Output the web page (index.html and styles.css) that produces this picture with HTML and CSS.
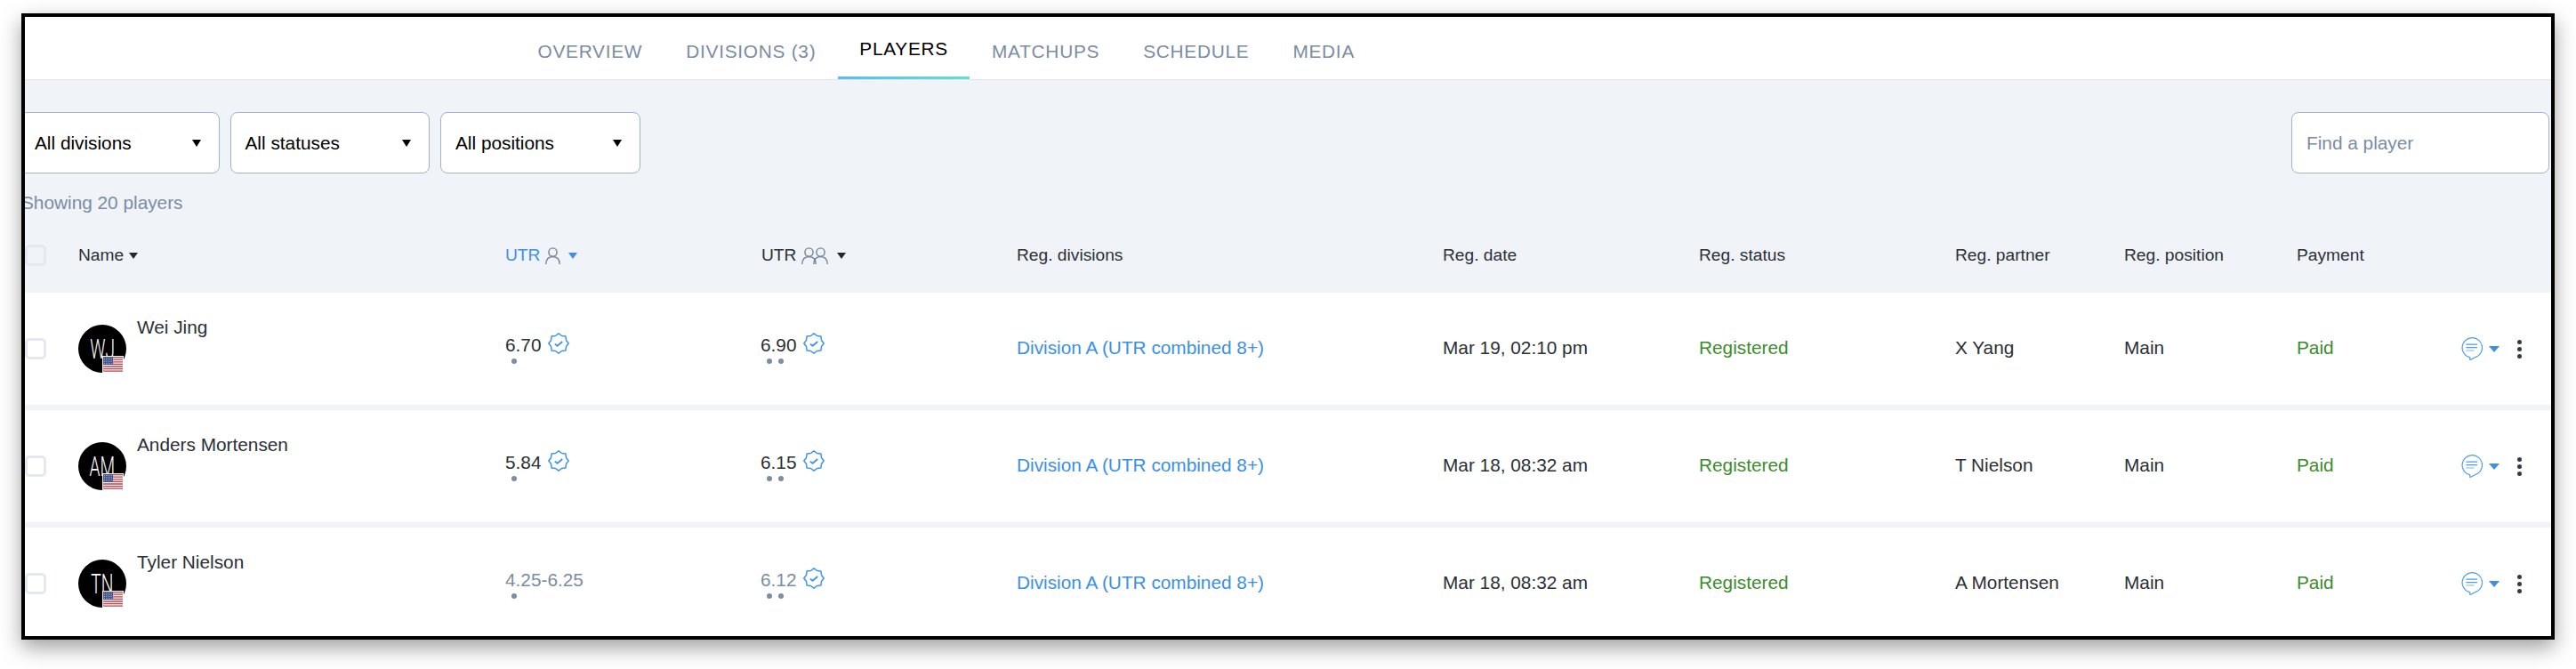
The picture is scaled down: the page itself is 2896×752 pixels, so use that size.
FILE: index.html
```html
<!DOCTYPE html>
<html lang="en">
<head>
<meta charset="utf-8">
<title>Players</title>
<link rel="stylesheet" href="styles.css">
</head>
<body>
<svg class="defs" aria-hidden="true">
  <symbol id="badge" viewBox="0 0 24 24">
    <polygon class="badge-line" points="12,.8 15.52,3.5 19.92,4.08 20.5,8.48 23.2,12 20.5,15.52 19.92,19.92 15.52,20.5 12,23.2 8.48,20.5 4.08,19.92 3.5,15.52 .8,12 3.5,8.48 4.08,4.08 8.48,3.5"/>
    <polyline class="badge-check" points="7.8,12.6 10.6,14.8 16.2,10"/>
  </symbol>
  <symbol id="person" viewBox="0 0 17 19">
    <circle class="person-line" cx="8.5" cy="5.5" r="4.6"/>
    <path class="person-line" d="M.8 19C.8 13.2 4 10.6 8.5 10.6S16.2 13.2 16.2 19"/>
  </symbol>
  <symbol id="people" viewBox="0 0 30 19">
    <circle class="person-line" cx="8.5" cy="5.5" r="4.6"/>
    <path class="person-line" d="M.8 19C.8 13.2 4 10.6 8.5 10.6S16.2 13.2 16.2 19"/>
    <circle class="person-line" cx="21.5" cy="5.5" r="4.6"/>
    <path class="person-line" d="M13.8 19C13.8 13.2 17 10.6 21.5 10.6S29.2 13.2 29.2 19"/>
  </symbol>
  <symbol id="chat" viewBox="0 0 24 26">
    <path class="chat-line" d="M9.5 22.7A11.2 11.2 0 1 1 18.5 21.2L10 25.5Z"/>
    <path class="chat-text" d="M5.5 8.2H18M5.5 11.6H18"/>
    <path class="chat-text chat-last" d="M5.5 15H14.5"/>
  </symbol>
  <symbol id="flag" viewBox="0 0 22 17">
    <rect width="22" height="17" fill="#f3eeee"/>
    <path d="M0 .6H22M0 3.2H22M0 5.8H22M0 8.4H22M0 11H22M0 13.6H22M0 16.2H22" stroke="#bb4c55" stroke-width="1.3"/>
    <rect width="11" height="9" fill="#47568c"/>
    <path d="M1 1.5H10M1 3.5H10M1 5.5H10M1 7.5H10" stroke="#a4acc9" stroke-width=".8" stroke-dasharray="1 1"/>
  </symbol>
</svg>

<main class="frame">
  <nav class="tabs">
    <a class="tab">OVERVIEW</a>
    <a class="tab">DIVISIONS (3)</a>
    <a class="tab tab-active">PLAYERS</a>
    <a class="tab">MATCHUPS</a>
    <a class="tab">SCHEDULE</a>
    <a class="tab">MEDIA</a>
  </nav>

  <section class="panel">
    <div class="filters">
      <div class="select">All divisions<i class="caret caret-black"></i></div>
      <div class="select">All statuses<i class="caret caret-black"></i></div>
      <div class="select">All positions<i class="caret caret-black"></i></div>
      <input class="search" type="text" placeholder="Find a player">
    </div>
    <p class="count">Showing 20 players</p>
    <div class="cols head">
      <span class="check"></span>
      <span class="head-item">Name<i class="caret caret-small caret-dark name-caret"></i></span>
      <span class="head-item head-blue">UTR<svg class="person-icon"><use href="#person"/></svg><i class="caret caret-small caret-blue"></i></span>
      <span class="head-item">UTR<svg class="people-icon"><use href="#people"/></svg><i class="caret caret-small caret-dark"></i></span>
      <span>Reg. divisions</span>
      <span>Reg. date</span>
      <span>Reg. status</span>
      <span>Reg. partner</span>
      <span>Reg. position</span>
      <span>Payment</span>
      <span></span>
    </div>
  </section>

  <article class="cols row">
    <span class="check"></span>
    <div class="player">
      <div class="avatar"><span class="initials">WJ</span><svg class="flag"><use href="#flag"/></svg></div>
      <span class="name">Wei Jing</span>
    </div>
    <div class="score">
      <div class="score-line">6.70<svg class="badge"><use href="#badge"/></svg></div>
      <div class="dots"><i class="dot"></i></div>
    </div>
    <div class="score score-double">
      <div class="score-line">6.90<svg class="badge"><use href="#badge"/></svg></div>
      <div class="dots"><i class="dot"></i><i class="dot"></i></div>
    </div>
    <a class="cell link">Division A (UTR combined 8+)</a>
    <span class="cell">Mar 19, 02:10 pm</span>
    <span class="cell green">Registered</span>
    <span class="cell">X Yang</span>
    <span class="cell">Main</span>
    <span class="cell green">Paid</span>
    <div class="actions">
      <svg class="chat"><use href="#chat"/></svg><i class="caret caret-blue chat-caret"></i>
      <div class="kebab"><i></i><i></i><i></i></div>
    </div>
  </article>

  <article class="cols row">
    <span class="check"></span>
    <div class="player">
      <div class="avatar"><span class="initials">AM</span><svg class="flag"><use href="#flag"/></svg></div>
      <span class="name">Anders Mortensen</span>
    </div>
    <div class="score">
      <div class="score-line">5.84<svg class="badge"><use href="#badge"/></svg></div>
      <div class="dots"><i class="dot"></i></div>
    </div>
    <div class="score score-double">
      <div class="score-line">6.15<svg class="badge"><use href="#badge"/></svg></div>
      <div class="dots"><i class="dot"></i><i class="dot"></i></div>
    </div>
    <a class="cell link">Division A (UTR combined 8+)</a>
    <span class="cell">Mar 18, 08:32 am</span>
    <span class="cell green">Registered</span>
    <span class="cell">T Nielson</span>
    <span class="cell">Main</span>
    <span class="cell green">Paid</span>
    <div class="actions">
      <svg class="chat"><use href="#chat"/></svg><i class="caret caret-blue chat-caret"></i>
      <div class="kebab"><i></i><i></i><i></i></div>
    </div>
  </article>

  <article class="cols row">
    <span class="check"></span>
    <div class="player">
      <div class="avatar"><span class="initials">TN</span><svg class="flag"><use href="#flag"/></svg></div>
      <span class="name">Tyler Nielson</span>
    </div>
    <div class="score">
      <div class="score-line muted">4.25-6.25</div>
      <div class="dots"><i class="dot"></i></div>
    </div>
    <div class="score score-double">
      <div class="score-line muted">6.12<svg class="badge"><use href="#badge"/></svg></div>
      <div class="dots"><i class="dot"></i><i class="dot"></i></div>
    </div>
    <a class="cell link">Division A (UTR combined 8+)</a>
    <span class="cell">Mar 18, 08:32 am</span>
    <span class="cell green">Registered</span>
    <span class="cell">A Mortensen</span>
    <span class="cell">Main</span>
    <span class="cell green">Paid</span>
    <div class="actions">
      <svg class="chat"><use href="#chat"/></svg><i class="caret caret-blue chat-caret"></i>
      <div class="kebab"><i></i><i></i><i></i></div>
    </div>
  </article>
</main>
</body>
</html>
```
FILE: styles.css
```css
* { box-sizing: border-box; }

html, body { height: 100%; }

body {
  margin: 0;
  padding: 15px 24px 0;
  background: #fff;
  font-family: "Liberation Sans", Arial, sans-serif;
  font-size: 20.8px;
  line-height: 24px;
  color: #2b2f36;
  overflow: hidden;
}

.defs { display: none; }

.frame {
  width: 2848px;
  height: 704px;
  border: 4px solid #000;
  background: #f0f3f8;
  overflow: hidden;
  box-shadow: 0 9px 22px rgba(0, 0, 0, .38);
}

/* Tabs */
.tabs {
  display: flex;
  height: 71px;
  padding-left: 552px;
  background: #fff;
  border-bottom: 1px solid #e1e5eb;
}

.tab {
  position: relative;
  padding: 27px 24.5px 0;
  color: #7b8ca3;
  letter-spacing: .75px;
  white-space: nowrap;
}

.tab-active {
  padding-top: 24px;
  color: #000;
}

.tab-active::after {
  content: "";
  position: absolute;
  left: 0;
  right: 0;
  bottom: 0;
  height: 3px;
  background: linear-gradient(90deg, #58bdf2, #60e0cc);
}

/* Filters */
.panel {
  height: 239px;
  padding-top: 36px;
}

.filters {
  display: flex;
  gap: 12px;
  height: 69px;
  margin-left: -6px;
  padding-right: 2px;
}

.select {
  display: flex;
  align-items: center;
  justify-content: space-between;
  width: 224.5px;
  padding: 0 20px 0 16px;
  background: #fff;
  border: 1px solid #a5b1c6;
  border-radius: 8px;
  color: #000;
}

.search {
  width: 290px;
  margin-left: auto;
  padding: 0 16px;
  background: #fff;
  border: 1px solid #a5b1c6;
  border-radius: 8px;
  font: inherit;
}

.search::placeholder {
  color: #7b8ca3;
  opacity: 1;
}

.count {
  margin: 21px 0 0 -4px;
  color: #7b8ca3;
}

/* Carets */
.caret {
  display: block;
  flex: none;
  width: 0;
  height: 0;
  border-style: solid;
  border-width: 8px 5.5px 0;
  border-color: #000 transparent transparent;
}

.caret-small { border-width: 7px 5.5px 0; }
.caret-black { border-top-color: #000; }
.caret-dark { border-top-color: #23272e; }
.caret-blue { border-top-color: #3f8fe9; }

/* Shared columns */
.cols {
  display: grid;
  grid-template-columns: 60px 480px 288px 287px 479px 288px 288px 190px 194px 185px 91px;
  align-items: center;
}

.head {
  margin-top: 35px;
  height: 24px;
  font-size: 19.2px;
  color: #2b3038;
}

.head-item {
  display: flex;
  align-items: center;
}

.head-blue { color: #3f8fe9; }

.name-caret { margin-left: 6px; }

.person-icon {
  width: 17px;
  height: 19px;
  margin: 0 9px 0 6px;
}

.people-icon {
  width: 30px;
  height: 19px;
  margin: 0 10px 0 6px;
}

.person-line {
  fill: none;
  stroke: #6f8098;
  stroke-width: 1.4;
}

.check {
  display: block;
  width: 24px;
  height: 24px;
  border: 3px solid #e5e9ef;
  border-radius: 5px;
}

/* Rows */
.row {
  height: 126px;
  margin-bottom: 6px;
  background: #fff;
}

.cell { margin-top: -2px; }

.player {
  display: flex;
  align-items: flex-start;
  gap: 12px;
}

.avatar {
  position: relative;
  display: flex;
  align-items: center;
  justify-content: center;
  flex: none;
  width: 54px;
  height: 54px;
  border-radius: 50%;
  background: #000;
}

.initials {
  display: block;
  font-family: Roboto, "Liberation Sans", sans-serif;
  font-weight: 300;
  font-size: 32px;
  color: #fff;
  transform: scaleX(.6);
}

.flag {
  position: absolute;
  left: 27px;
  top: 35px;
  width: 24px;
  height: 19px;
  background: #fff;
  padding: 1px;
}

.name {
  margin-top: -9px;
  color: #2b2f36;
}

.score {
  display: flex;
  flex-direction: column;
}

.score-line {
  display: flex;
  align-items: center;
  margin-top: 1px;
}

.score-double { margin-left: -1px; }

.muted { color: #7b8ca3; }

.badge {
  width: 24px;
  height: 24px;
  margin: -4px 0 0 8px;
}

.badge-line {
  fill: none;
  stroke: #3f94ee;
  stroke-width: 1.5;
  stroke-linejoin: round;
}

.badge-check {
  fill: none;
  stroke: #3f94ee;
  stroke-width: 1.8;
}

.dots {
  display: flex;
  gap: 7px;
  margin: 3px 0 0 7px;
}

.dot {
  display: block;
  width: 6px;
  height: 6px;
  border-radius: 50%;
  background: #7b8ca3;
}

.link { color: #3a8fe8; }
.green { color: #3c8c2c; }

/* Row actions */
.actions {
  display: flex;
  align-items: center;
}

.chat {
  width: 24px;
  height: 26px;
}

.chat-line {
  fill: none;
  stroke: #4a9cee;
  stroke-width: 1.2;
}

.chat-text {
  fill: none;
  stroke: #4a9cee;
  stroke-width: 1.2;
}

.chat-last { opacity: .6; }

.chat-caret {
  margin-left: 7px;
  border-width: 7px 6px 0;
}

.kebab {
  display: flex;
  flex-direction: column;
  gap: 3px;
  margin-left: 20px;
}

.kebab i {
  display: block;
  width: 5px;
  height: 5px;
  border-radius: 50%;
  background: #333a45;
}
```
